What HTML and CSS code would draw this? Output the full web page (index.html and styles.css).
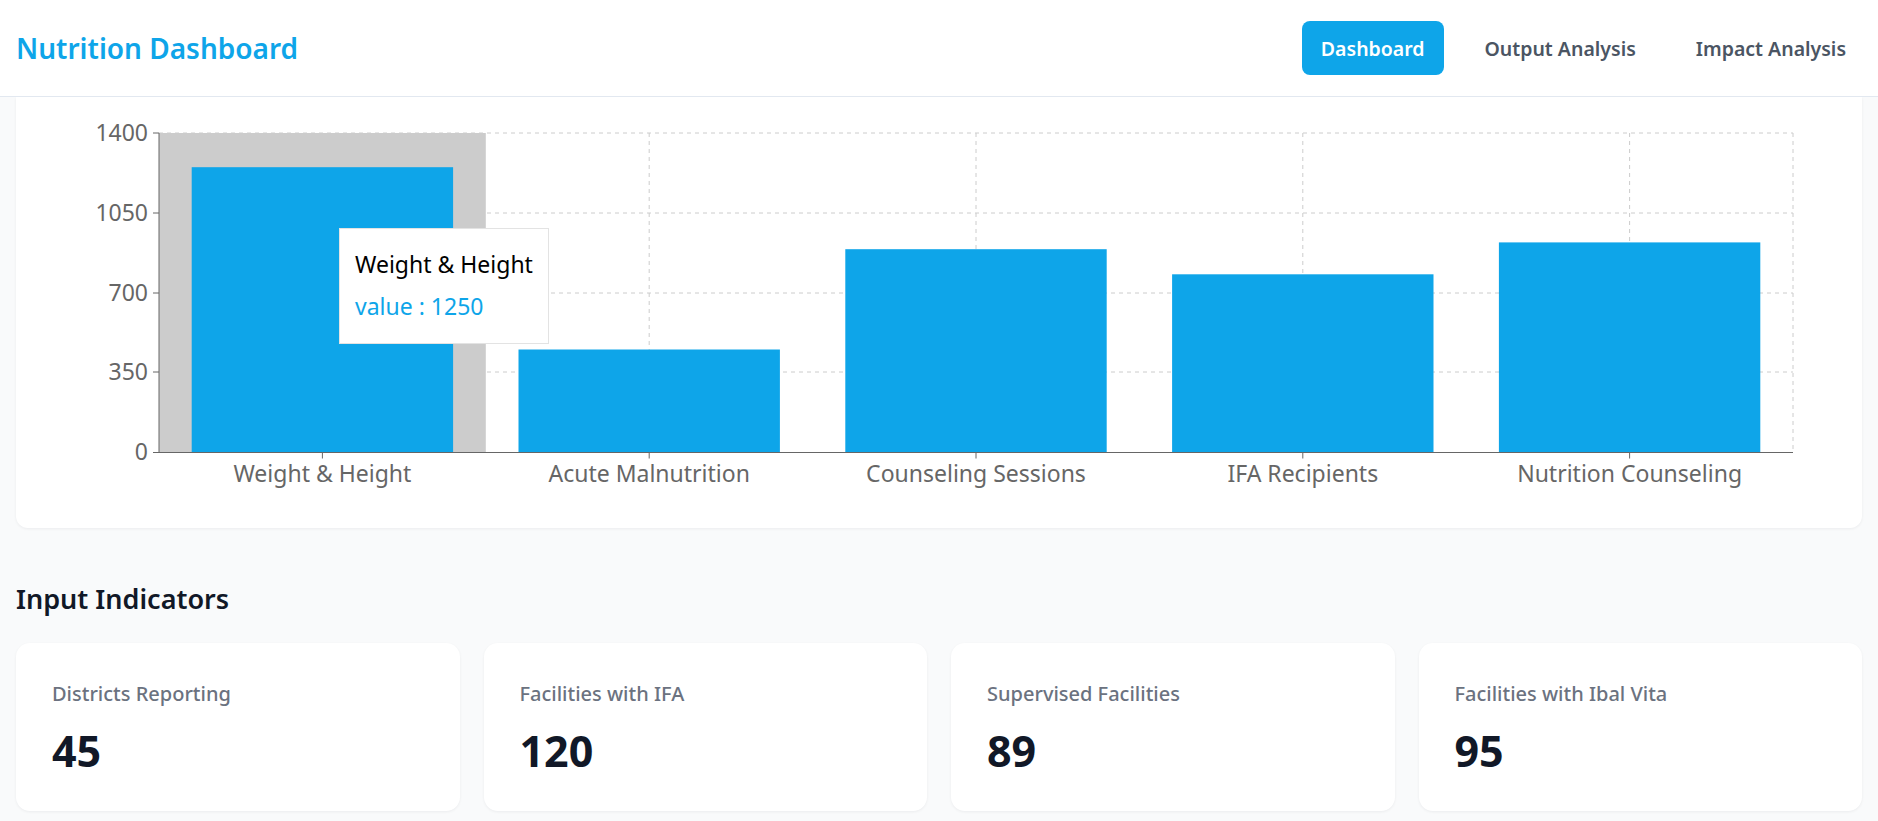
FILE: index.html
```html
<!DOCTYPE html>
<html lang="en">
<head>
<meta charset="utf-8">
<title>Nutrition Dashboard</title>
<link rel="stylesheet" href="styles.css">
</head>
<body>
<header class="topbar">
  <h1 class="brand">Nutrition Dashboard</h1>
  <nav class="nav">
    <a class="nav-item active">Dashboard</a>
    <a class="nav-item">Output Analysis</a>
    <a class="nav-item">Impact Analysis</a>
  </nav>
</header>
<main class="content">
  <section class="chart-card">
    <svg class="chart" width="1846" height="431" viewBox="0 0 1846 431">
      <g class="grid">
        <line x1="143" y1="36" x2="1777" y2="36"/>
        <line x1="143" y1="116" x2="1777" y2="116"/>
        <line x1="143" y1="196" x2="1777" y2="196"/>
        <line x1="143" y1="275" x2="1777" y2="275"/>
        <line x1="306.4" y1="36" x2="306.4" y2="355"/>
        <line x1="633.2" y1="36" x2="633.2" y2="355"/>
        <line x1="960" y1="36" x2="960" y2="355"/>
        <line x1="1286.8" y1="36" x2="1286.8" y2="355"/>
        <line x1="1613.6" y1="36" x2="1613.6" y2="355"/>
        <line x1="1777" y1="36" x2="1777" y2="355"/>
      </g>
      <rect class="cursor" x="143" y="36" width="326.8" height="319"/>
      <g class="bars">
        <rect x="175.7" y="70.2" width="261.4" height="284.8"/>
        <rect x="502.5" y="252.5" width="261.4" height="102.5"/>
        <rect x="829.3" y="152.2" width="261.4" height="202.8"/>
        <rect x="1156.1" y="177.3" width="261.4" height="177.7"/>
        <rect x="1482.9" y="145.4" width="261.4" height="209.6"/>
      </g>
      <g class="axis">
        <line x1="143" y1="36" x2="143" y2="355.5"/>
        <line x1="143" y1="355.5" x2="1777" y2="355.5"/>
        <line x1="137" y1="36" x2="143" y2="36"/>
        <line x1="137" y1="116" x2="143" y2="116"/>
        <line x1="137" y1="196" x2="143" y2="196"/>
        <line x1="137" y1="275" x2="143" y2="275"/>
        <line x1="137" y1="355.5" x2="143" y2="355.5"/>
        <line x1="306.4" y1="355.5" x2="306.4" y2="361.5"/>
        <line x1="633.2" y1="355.5" x2="633.2" y2="361.5"/>
        <line x1="960" y1="355.5" x2="960" y2="361.5"/>
        <line x1="1286.8" y1="355.5" x2="1286.8" y2="361.5"/>
        <line x1="1613.6" y1="355.5" x2="1613.6" y2="361.5"/>
      </g>
      <g class="ticks-y">
        <text x="132" y="44">1400</text>
        <text x="132" y="124">1050</text>
        <text x="132" y="204">700</text>
        <text x="132" y="283">350</text>
        <text x="132" y="363">0</text>
      </g>
      <g class="ticks-x">
        <text x="306.4" y="385">Weight &amp; Height</text>
        <text x="633.2" y="385">Acute Malnutrition</text>
        <text x="960" y="385">Counseling Sessions</text>
        <text x="1286.8" y="385">IFA Recipients</text>
        <text x="1613.6" y="385">Nutrition Counseling</text>
      </g>
    </svg>
    <div class="tooltip">
      <p class="tooltip-label">Weight &amp; Height</p>
      <p class="tooltip-value">value : 1250</p>
    </div>
  </section>

  <h2 class="section-title">Input Indicators</h2>
  <section class="stats">
    <div class="stat-card">
      <p class="stat-label">Districts Reporting</p>
      <p class="stat-value">45</p>
    </div>
    <div class="stat-card">
      <p class="stat-label">Facilities with IFA</p>
      <p class="stat-value">120</p>
    </div>
    <div class="stat-card">
      <p class="stat-label">Supervised Facilities</p>
      <p class="stat-value">89</p>
    </div>
    <div class="stat-card">
      <p class="stat-label">Facilities with Ibal Vita</p>
      <p class="stat-value">95</p>
    </div>
  </section>
</main>
</body>
</html>
```

FILE: styles.css
```css
* { box-sizing: border-box; }

html, body {
  margin: 0;
  padding: 0;
  height: 100%;
  overflow: hidden;
}

body {
  background: #f9fafb;
  font-family: "Noto Sans", "Open Sans", sans-serif;
  color: #111827;
}

.topbar {
  height: 97px;
  background: #ffffff;
  border-bottom: 1px solid #e2e8f0;
  display: flex;
  align-items: center;
  justify-content: space-between;
  padding: 0 13px 0 16px;
  position: relative;
  z-index: 2;
}

.brand {
  margin: 0;
  font-size: 28px;
  font-weight: 600;
  color: #0ea5e9;
  letter-spacing: 0;
}

.nav {
  display: flex;
  gap: 22px;
}

.nav-item {
  display: flex;
  align-items: center;
  height: 54px;
  padding: 0 19px;
  border-radius: 8px;
  font-size: 19.5px;
  font-weight: 600;
  color: #4b5563;
  cursor: pointer;
}

.nav-item.active {
  background: #0ea5e9;
  color: #ffffff;
}

.content {
  padding: 0 16px;
}

.chart-card {
  position: relative;
  background: #ffffff;
  border-radius: 0 0 12px 12px;
  box-shadow: 0 1px 3px rgba(15, 23, 42, 0.06);
  height: 431px;
}

.chart {
  display: block;
}

.grid line {
  stroke: #cccccc;
  stroke-width: 1;
  stroke-dasharray: 4 4;
}

.cursor {
  fill: #cccccc;
}

.bars rect {
  fill: #0ea5e9;
}

.axis line {
  stroke: #666666;
  stroke-width: 1;
}

.ticks-y text,
.ticks-x text {
  font-family: "Noto Sans", "Open Sans", sans-serif;
  font-size: 23px;
  fill: #666666;
}

.ticks-y text { text-anchor: end; }
.ticks-x text { text-anchor: middle; }

.tooltip {
  position: absolute;
  left: 323px;
  top: 131px;
  width: 210px;
  height: 116px;
  background: #ffffff;
  border: 1px solid #e3e3e3;
  padding: 20px 15px 0 15px;
  font-size: 23px;
  line-height: 30px;
  white-space: nowrap;
}

.tooltip p {
  margin: 0;
}

.tooltip-label {
  color: #000000;
}

.tooltip-value {
  margin-top: 12px !important;
  color: #0ea5e9;
}

.section-title {
  margin: 53px 0 26px;
  font-size: 27px;
  line-height: 36px;
  font-weight: 600;
  color: #111827;
}

.stats {
  display: grid;
  grid-template-columns: repeat(4, 1fr);
  gap: 24px;
}

.stat-card {
  background: #ffffff;
  border-radius: 14px;
  box-shadow: 0 1px 3px rgba(15, 23, 42, 0.06);
  height: 168px;
  padding: 37px 36px 0;
}

.stat-label {
  margin: 0;
  font-size: 20px;
  line-height: 28px;
  font-weight: 500;
  color: #6b7280;
}

.stat-value {
  margin: 19px 0 0;
  font-size: 43px;
  line-height: 48px;
  font-weight: 700;
  color: #111827;
}
```
